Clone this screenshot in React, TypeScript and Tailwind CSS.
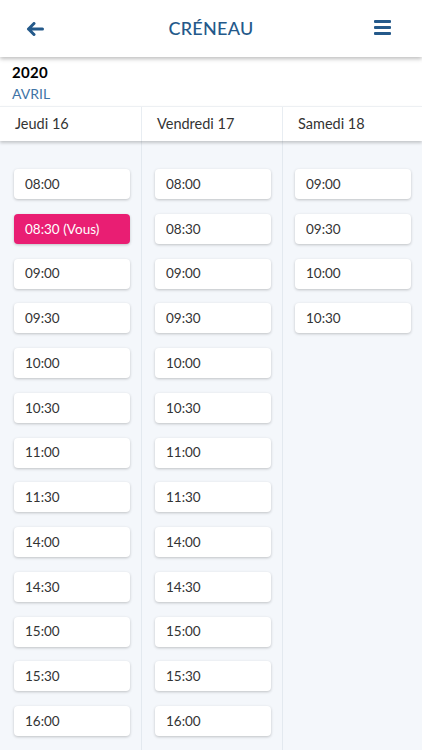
import * as React from 'react';

const days = [
  {
    label: 'Jeudi 16',
    pad: 'pl-[14px]',
    slots: ['08:00', '08:30 (Vous)', '09:00', '09:30', '10:00', '10:30', '11:00', '11:30', '14:00', '14:30', '15:00', '15:30', '16:00'],
  },
  {
    label: 'Vendredi 17',
    pad: 'pl-[13px]',
    slots: ['08:00', '08:30', '09:00', '09:30', '10:00', '10:30', '11:00', '11:30', '14:00', '14:30', '15:00', '15:30', '16:00'],
  },
  {
    label: 'Samedi 18',
    pad: 'pl-[12px]',
    slots: ['09:00', '09:30', '10:00', '10:30'],
  },
];

export default function App() {
  return (
    <div className="h-[750px] w-full overflow-hidden flex flex-col bg-[#f4f7fb] text-[#2b2b2b] font-['Lato',sans-serif]">
      {/* Top bar */}
      <header className="relative z-20 h-[57px] shrink-0 bg-white flex items-center justify-between px-[26px] shadow-[0_2px_4px_rgba(0,0,0,0.25)]">
        <svg width="18" height="14" viewBox="0 0 18 14" className="mt-[1px]">
          <path d="M16.5 7 H2.5 M8 1.5 L2.5 7 L8 12.5" fill="none" stroke="#24598a" strokeWidth="3" strokeLinecap="round" strokeLinejoin="round" />
        </svg>
        <h1 className="text-[18px] font-medium tracking-[0.3px] text-[#24598a] ml-[4px]">CRÉNEAU</h1>
        <div className="flex flex-col gap-[3px] mr-[5px] -mt-[2px]">
          <span className="block h-[3px] w-[17px] bg-[#24598a] rounded-[1px]" />
          <span className="block h-[3px] w-[17px] bg-[#24598a] rounded-[1px]" />
          <span className="block h-[3px] w-[17px] bg-[#24598a] rounded-[1px]" />
        </div>
      </header>

      {/* Month / year */}
      <div className="bg-white h-[49px] shrink-0 px-[12px] pt-[5px]">
        <div className="text-[15px] font-bold leading-[20px] text-black tracking-[0.3px]">2020</div>
        <div className="text-[14px] leading-[20px] mt-[2px] text-[#3f74a6]">AVRIL</div>
      </div>

      {/* Day headers */}
      <div className="relative z-10 grid grid-cols-[142px_141px_1fr] h-[35px] shrink-0 bg-white border-t border-[#edf0f3] shadow-[0_2px_3px_rgba(0,0,0,0.2)]">
        {days.map((d, i) => (
          <div key={d.label} className={`flex items-center pl-[15px] text-[14.5px] text-[#333] ${i < 2 ? 'border-r border-[#e8edf2]' : ''}`}>
            {d.label}
          </div>
        ))}
      </div>

      {/* Slots */}
      <div className="grid grid-cols-[142px_141px_1fr] flex-1">
        {days.map((d, i) => (
          <div key={d.label} className={`flex flex-col gap-[14.75px] pt-[28px] ${d.pad} ${i < 2 ? 'border-r border-[#e3e9ef]' : ''}`}>
            {d.slots.map((s) => {
              const mine = s.includes('Vous');
              return (
                <div
                  key={s}
                  className={`w-[116px] h-[30px] shrink-0 rounded-[4px] flex items-center pl-[11px] text-[13.5px] shadow-[0_1px_3px_rgba(0,0,0,0.22)] ${
                    mine ? 'bg-[#e91e73] text-white' : 'bg-white text-[#333]'
                  }`}
                >
                  {s}
                </div>
              );
            })}
          </div>
        ))}
      </div>
    </div>
  );
}
